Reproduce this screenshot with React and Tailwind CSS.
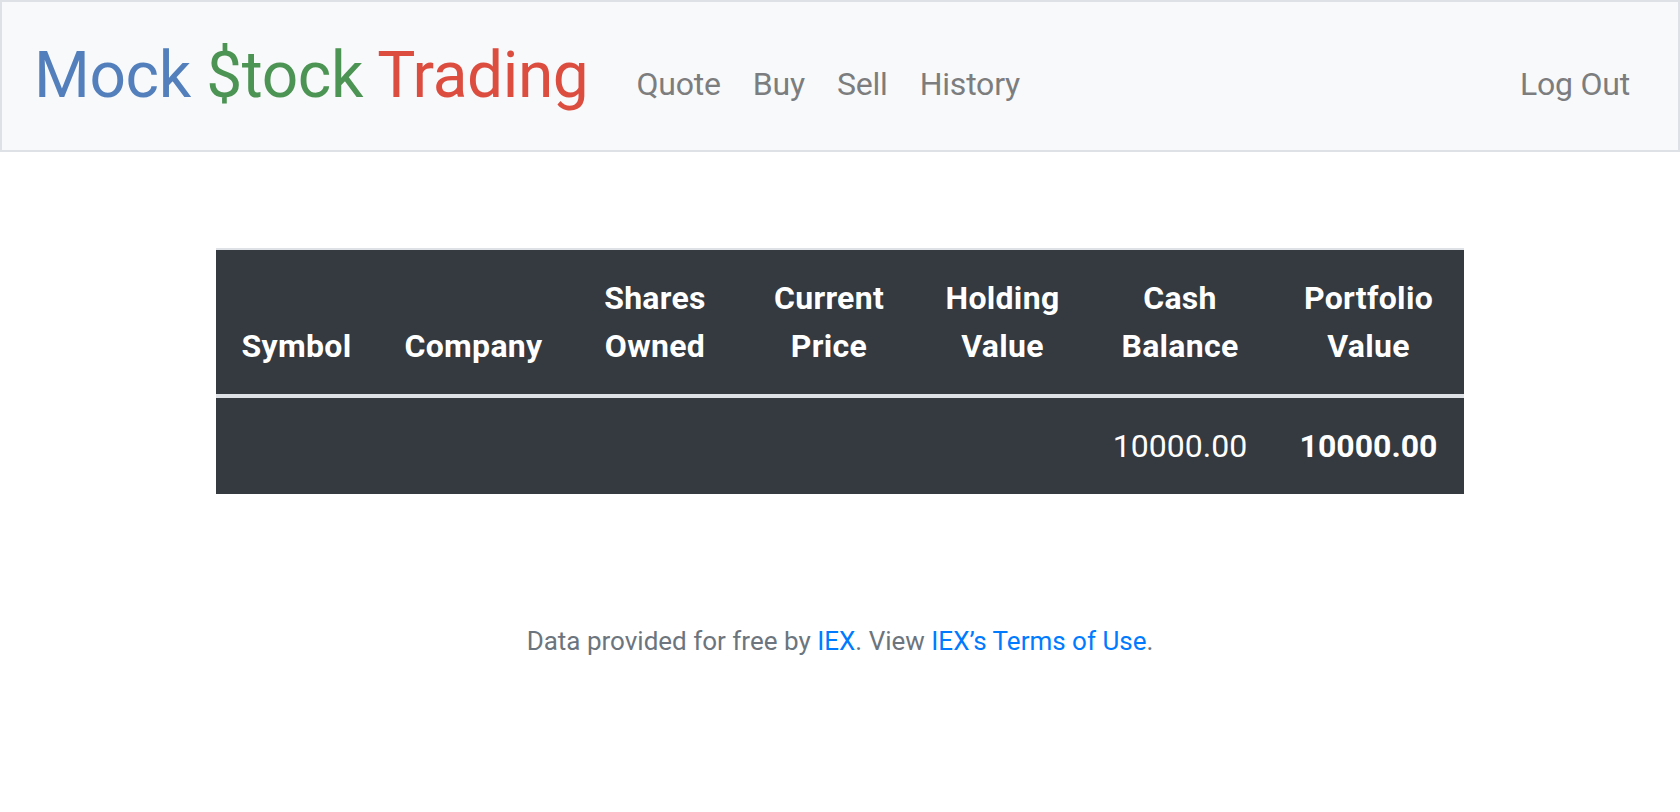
export default function App() {
  return (
    <div className="min-h-[812px] bg-white font-['Roboto','Liberation_Sans',Arial,sans-serif]">
      <nav className="flex items-center border-2 border-[#dee2e6] bg-[#f8f9fa] px-8 py-4">
        <a href="#" className="mr-8 whitespace-nowrap py-[10px] text-[64px] leading-[96px] tracking-[-0.4px]">
          <span className="text-[#5380bd]">Mock</span>{" "}
          <span className="text-[#4c9453]">$tock</span>{" "}
          <span className="text-[#dc4d40]">Trading</span>
        </a>
        <ul className="mt-4 flex">
          {["Quote", "Buy", "Sell", "History"].map((t) => (
            <li key={t}>
              <a href="#" className="block px-4 py-4 text-[32px] leading-[48px] tracking-[-0.2px] text-[#7c7d7e]">
                {t}
              </a>
            </li>
          ))}
        </ul>
        <ul className="ml-auto mt-4 flex">
          <li>
            <a href="#" className="block px-4 py-4 text-[32px] leading-[48px] tracking-[-0.2px] text-[#7c7d7e]">
              Log Out
            </a>
          </li>
        </ul>
      </nav>
      <main className="mx-auto max-w-[1440px] p-[96px]">
        <table className="mb-8 w-full table-fixed border-separate border-spacing-0 bg-[#343a40] text-center text-[32px] leading-[48px] text-white">
          <colgroup>
            <col className="w-[161px]" />
            <col className="w-[193px]" />
            <col className="w-[170px]" />
            <col className="w-[178px]" />
            <col className="w-[169px]" />
            <col className="w-[186px]" />
            <col className="w-[191px]" />
          </colgroup>
          <thead>
            <tr>
              {[
                ["Symbol"],
                ["Company"],
                ["Shares", "Owned"],
                ["Current", "Price"],
                ["Holding", "Value"],
                ["Cash", "Balance"],
                ["Portfolio", "Value"],
              ].map((lines, i) => (
                <th
                  key={i}
                  className="border-t-2 border-b-4 border-[#dee2e6] p-6 align-bottom font-bold whitespace-nowrap tracking-[0.3px]"
                >
                  {lines.map((l, j) => (
                    <span key={j}>
                      {j > 0 && <br />}
                      {l}
                    </span>
                  ))}
                </th>
              ))}
            </tr>
          </thead>
          <tbody>
            <tr>
              <td className="p-6"></td>
              <td className="p-6"></td>
              <td className="p-6"></td>
              <td className="p-6"></td>
              <td className="p-6"></td>
              <td className="p-6 whitespace-nowrap">10000.00</td>
              <td className="p-6 font-bold whitespace-nowrap">10000.00</td>
            </tr>
          </tbody>
        </table>
      </main>
      <footer className="text-center text-[26px] leading-[39px] text-[#6c757d]">
        Data provided for free by <a href="#" className="text-[#007bff]">IEX</a>. View{" "}
        <a href="#" className="text-[#007bff]">IEX’s Terms of Use</a>.
      </footer>
    </div>
  );
}
